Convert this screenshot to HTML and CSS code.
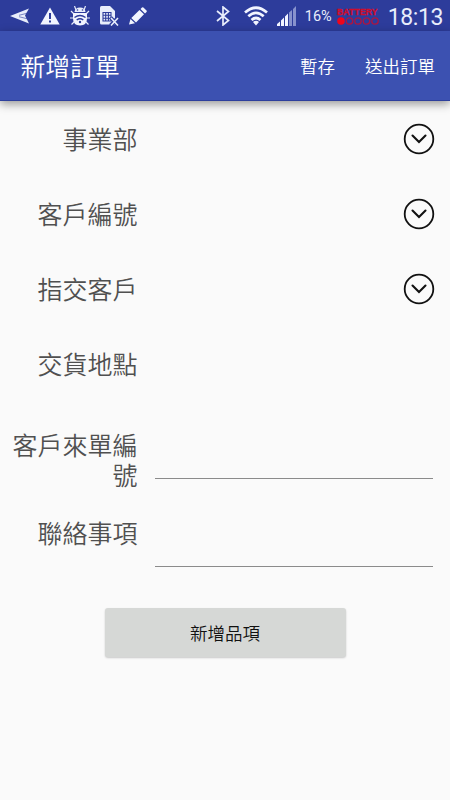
FILE: index.html
```
<!DOCTYPE html>
<html lang="zh-Hant">
<head>
  <meta charset="UTF-8">
  <title>新增訂單</title>
  <meta name="viewport" content="width=device-width, initial-scale=1.0">
  <link rel="stylesheet" href="styles.css">
</head>
<body>
<div class="status-bar">
  <div class="notices">
    <svg width="20" height="18" viewBox="0 0 20 18"><path d="M0 9L19 1.500L15 8.400L19 16.500Z" fill="#e8edfb"/><path d="M9 8.300L20 5.500M9 9.700L20 12.500" stroke="#2d3c9b" stroke-width=".6"/></svg>
    <svg width="20" height="18" viewBox="0 0 20 18"><path d="M10 .5L19.700 17.500H.3Z" fill="#f2f5ff"/><path d="M10 6v6M10 13.500v2" stroke="#2d3c9b" stroke-width="2"/></svg>
    <svg width="20" height="20" viewBox="0 0 20 20"><g stroke="#e8edfb" stroke-width="1.200"><path d="M6 4L4.500 0M14 4L15.500 0M4 8L1 5M16 8L19 5M4 12H0M16 12H20M5 15L1.500 18.500M15 15L18.500 18.500"/></g><path d="M4.500 6Q5 1.500 10 1.500T15.500 6Z" fill="#e8edfb"/><path d="M3 7H17V12Q17 19.500 10 19.500T3 12Z" fill="#f2f5ff"/><circle cx="7.500" cy="4" r=".8" fill="#2d3c9b"/><circle cx="12.500" cy="4" r=".8" fill="#2d3c9b"/><path d="M4.500 11.500Q10 7.500 15.500 11.500M6.700 14Q10 11.500 13.300 14" fill="none" stroke="#2d3c9b" stroke-width="1.400"/><circle cx="10" cy="16" r="1.200" fill="#2d3c9b"/></svg>
    <svg width="19" height="20" viewBox="0 0 19 20"><path d="M1.500 0H10L15 5V18.500H1.500Q0 18.500 0 17V1.500Q0 0 1.500 0Z" fill="#e8edfb"/><path d="M3 6.500H11V15H3ZM5.700 6.500V15M8.400 6.500V15M3 9.300H11M3 12.200H11" fill="none" stroke="#2d3c9b" stroke-width="1.100"/><path d="M10.500 11.500L18 19.500M18 11.500L10.500 19.500" stroke="#2d3c9b" stroke-width="4"/><path d="M11 12L18 19.500M18 12L11 19.500" stroke="#e8edfb" stroke-width="1.600"/></svg>
    <svg width="18" height="18" viewBox="0 0 18 18"><path d="M0 17.500L1.500 12L6 16.300ZM2.300 11L10.500 3L15 7.300L7 15.500ZM11.500 2L13 .6Q13.700 0 14.400 .6L17.500 3.600Q18.200 4.300 17.500 5L16 6.400Z" fill="#f2f5ff"/></svg>
  </div>
  <div class="indicators">
    <svg width="14" height="20" viewBox="0 0 14 20"><path d="M1 5L12.500 14.500L7 19V1L12.500 5.500L1 15" fill="none" stroke="#e8edfb" stroke-width="1.700"/></svg>
    <svg class="wifi" width="24" height="20" viewBox="0 0 24 20"><g fill="none" stroke="#f2f5ff" stroke-width="2.700"><path d="M1 6.500Q12 -3 23 6.500M4.300 10.300Q12 3.500 19.700 10.300M7.500 14Q12 10 16.500 14"/></g><path d="M9 16Q12 13.500 15 16L12 19.500Z" fill="#f2f5ff"/></svg>
    <svg class="signal" width="20" height="20" viewBox="0 0 20 20"><path d="M0 20V18L3 15.500V20ZM4 20V14.500L7 11.500V20ZM8 20V10.500L11 7.500V20Z" fill="#f2f5ff"/><path d="M12 20V6.500L15 4V20ZM16 20V3L19 0V20Z" fill="#8792cd"/></svg>
    <span class="percent">16%</span>
    <div class="battery">
      <span>BATTERY</span>
      <svg width="42" height="8" viewBox="0 0 42 8"><circle cx="4" cy="4" r="3.800" fill="#f0051b"/><g fill="none" stroke="#b0143f" stroke-width="1.300"><circle cx="12.500" cy="4" r="3.200"/><circle cx="21" cy="4" r="3.200"/><circle cx="29.500" cy="4" r="3.200"/><circle cx="38" cy="4" r="3.200"/></g></svg>
    </div>
    <span class="clock">18:13</span>
  </div>
</div>
<header>
  <h1>新增訂單</h1>
  <nav>
    <button>暫存</button>
    <button>送出訂單</button>
  </nav>
</header>
<main>
  <div class="row">
    <label>事業部</label>
    <svg class="drop" viewBox="0 0 32 32"><circle cx="16" cy="16" r="14.300"/><path d="M9.500 12.500L16 19L22.500 12.500"/></svg>
  </div>
  <div class="row">
    <label>客戶編號</label>
    <svg class="drop" viewBox="0 0 32 32"><circle cx="16" cy="16" r="14.300"/><path d="M9.500 12.500L16 19L22.500 12.500"/></svg>
  </div>
  <div class="row">
    <label>指交客戶</label>
    <svg class="drop" viewBox="0 0 32 32"><circle cx="16" cy="16" r="14.300"/><path d="M9.500 12.500L16 19L22.500 12.500"/></svg>
  </div>
  <div class="row">
    <label>交貨地點</label>
  </div>
  <div class="row input-row">
    <label for="orderNo">客戶來單編號</label>
    <input id="orderNo">
  </div>
  <div class="row input-row">
    <label for="note">聯絡事項</label>
    <input id="note">
  </div>
  <button class="add">新增品項</button>
</main>
</body>
</html>
```
FILE: styles.css
```
* { box-sizing: border-box; }
body { margin: 0; height: 800px; overflow: hidden; background: #fafafa; font-family: Roboto, "Noto Sans CJK TC", sans-serif; font-weight: 350; }
svg { display: block; flex: none; }
button { border: none; background: none; padding: 0; font-family: inherit; font-weight: inherit; }

.status-bar { display: flex; justify-content: space-between; height: 31px; padding: 0 7px 0 10px; background: #2d3c9b; color: #e8edfb; }
.notices { display: flex; align-items: center; gap: 10px; }
.indicators { display: flex; align-items: center; }
.wifi { margin-left: 14px; }
.signal { margin-left: 9px; }
.percent { margin-left: 8px; padding-top: 2px; font-size: 14.5px; font-weight: 400; }
.battery { width: 42px; margin-left: 5px; padding-top: 1px; }
.battery span { display: block; height: 9px; font: bold 9px/9px "Liberation Sans", sans-serif; letter-spacing: -0.1px; color: #d00c2c; -webkit-text-stroke: 0.3px #d00c2c; }
.clock { margin-left: 9px; padding-top: 4px; font-size: 23px; line-height: 28px; letter-spacing: -0.4px; font-weight: 400; }

header { display: flex; align-items: center; justify-content: space-between; height: 70px; padding: 0 15px 0 20.5px; background: #3c51b1; color: #fff; border-bottom: 1px solid #2d3f9c; box-shadow: 0 3px 9px rgba(0,0,0,0.4); }
h1 { margin: 0 0 1px; font-size: 24.8px; font-weight: inherit; }
nav { display: flex; gap: 30px; }
nav button { color: #fff; font-size: 17.5px; }

main { display: flex; flex-direction: column; }
.row { display: flex; align-items: center; justify-content: space-between; height: 75px; padding: 0 15px 0 12.5px; }
.row label { width: 125px; padding-top: 4px; font-size: 25px; line-height: 30px; text-align: right; color: #505050; }
.drop { width: 32px; height: 32px; fill: none; stroke: #111; stroke-width: 1.8; }
.drop path { stroke-width: 2.1; stroke-linecap: round; }
.input-row { height: 88px; align-items: flex-start; padding: 28px 17px 0 12.5px; }
.input-row label { padding-top: 3px; }
.input-row input { width: 278px; height: 50px; padding: 0 4px; border: none; border-bottom: 1px solid #8b8b8b; background: none; font-size: 22px; outline: none; }
.add { align-self: center; width: 241px; height: 49px; margin-top: 31px; border-radius: 3px; background: #d6d8d6; color: #111; font-size: 17.5px; box-shadow: 0 1px 2px rgba(0,0,0,0.2); }
```
